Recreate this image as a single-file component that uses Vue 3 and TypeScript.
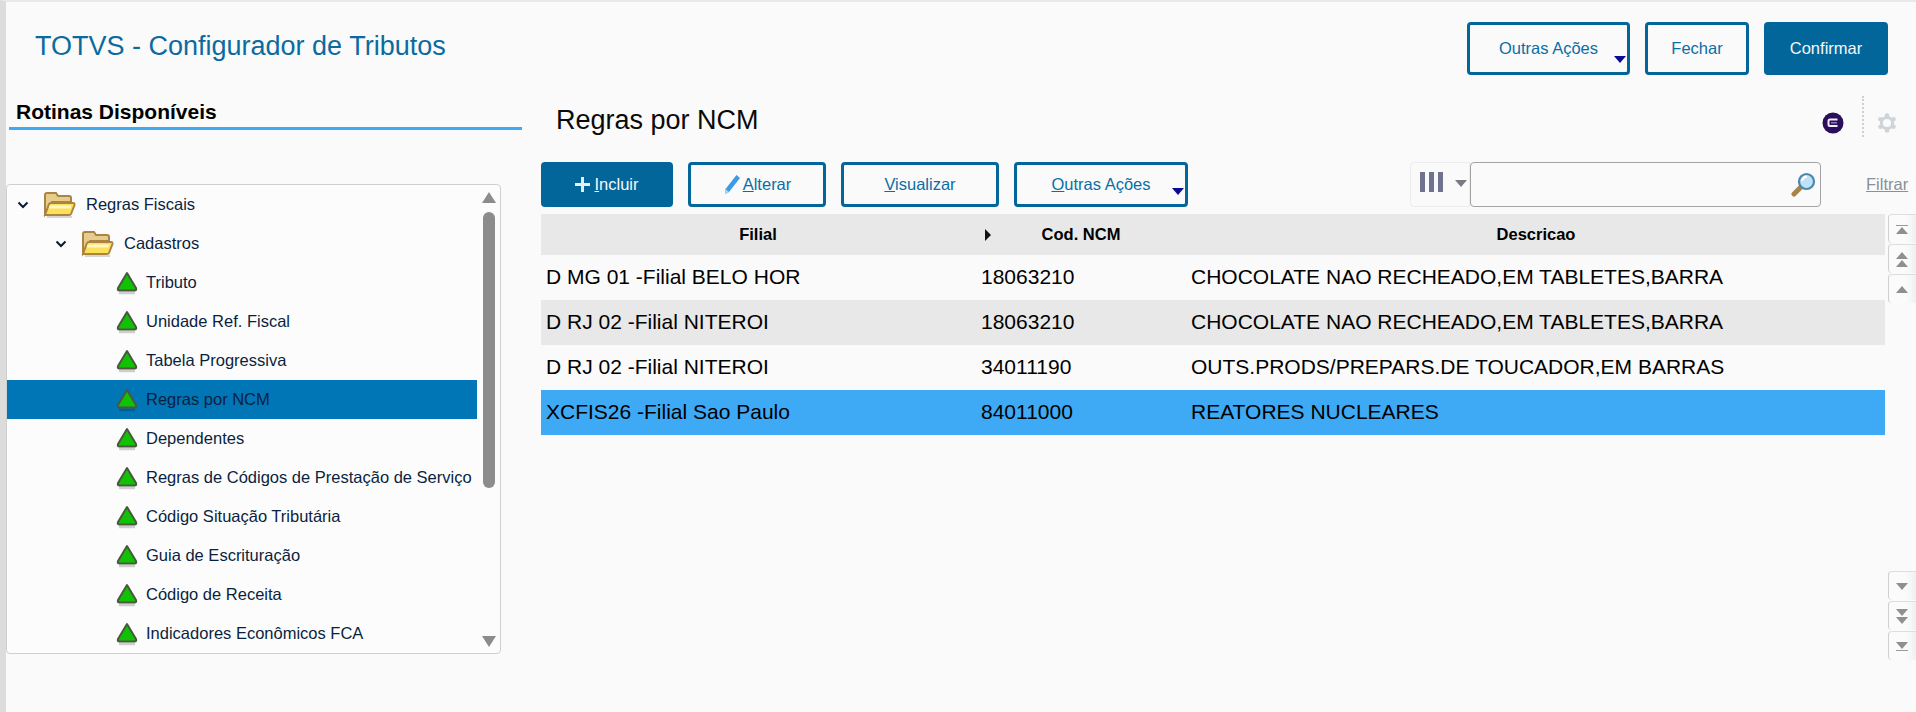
<script setup lang="ts">
// Configurador de Tributos: routine tree on the left, NCM rules grid on the right.
interface TreeItem { label: string; selected?: boolean }
interface GridRow { filial: string; ncm: string; descricao: string; tone?: 'alt' | 'active' }

const routines: TreeItem[] = [
  { label: 'Tributo' },
  { label: 'Unidade Ref. Fiscal' },
  { label: 'Tabela Progressiva' },
  { label: 'Regras por NCM', selected: true },
  { label: 'Dependentes' },
  { label: 'Regras de Códigos de Prestação de Serviço' },
  { label: 'Código Situação Tributária' },
  { label: 'Guia de Escrituração' },
  { label: 'Código de Receita' },
  { label: 'Indicadores Econômicos FCA' },
]

const rows: GridRow[] = [
  { filial: 'D MG 01 -Filial BELO HOR', ncm: '18063210', descricao: 'CHOCOLATE NAO RECHEADO,EM TABLETES,BARRA' },
  { filial: 'D RJ 02 -Filial NITEROI', ncm: '18063210', descricao: 'CHOCOLATE NAO RECHEADO,EM TABLETES,BARRA', tone: 'alt' },
  { filial: 'D RJ 02 -Filial NITEROI', ncm: '34011190', descricao: 'OUTS.PRODS/PREPARS.DE TOUCADOR,EM BARRAS' },
  { filial: 'XCFIS26 -Filial Sao Paulo', ncm: '84011000', descricao: 'REATORES NUCLEARES', tone: 'active' },
]
</script>

<template>
  <div class="page">
    <header class="top">
      <h1 class="app-title">TOTVS - Configurador de Tributos</h1>
      <div class="top-actions">
        <button class="btn btn--line btn--wide">Outras Ações<i class="menu-caret"></i></button>
        <button class="btn btn--line btn--close">Fechar</button>
        <button class="btn btn--solid btn--confirm">Confirmar</button>
      </div>
    </header>

    <div class="content">
      <aside class="side">
        <h2 class="side-title">Rotinas Disponíveis</h2>
        <div class="tree">
          <div class="tree-rows">
            <div class="node node--l0">
              <svg class="chev" width="12" height="8" viewBox="0 0 12 8"><path d="M1.5 1.5 6 6l4.5-4.5" fill="none" stroke="#0b1a33" stroke-width="2"/></svg>
              <svg class="folder" width="33" height="27" viewBox="0 0 33 27">
                <path d="M4 26h25" stroke="#000" stroke-opacity=".15" stroke-width="2"/>
                <path d="M2 23V4q0-2 2-2h9l2 3h11q2 0 2 2v4H9z" fill="#e6cd8e" stroke="#ab8444" stroke-width="2"/>
                <path d="M2 24 6 13q.4-1 2-1h22q2 0 1.500 2L28 23q-.4 1-2 1z" fill="#fbe05a" stroke="#ab8444" stroke-width="2"/>
                <path d="M6.500 14.500h22l-1 3H6z" fill="#fff7c4"/>
              </svg>
              <span class="node-label">Regras Fiscais</span>
            </div>
            <div class="node node--l1">
              <svg class="chev" width="12" height="8" viewBox="0 0 12 8"><path d="M1.5 1.5 6 6l4.5-4.5" fill="none" stroke="#0b1a33" stroke-width="2"/></svg>
              <svg class="folder" width="33" height="27" viewBox="0 0 33 27">
                <path d="M4 26h25" stroke="#000" stroke-opacity=".15" stroke-width="2"/>
                <path d="M2 23V4q0-2 2-2h9l2 3h11q2 0 2 2v4H9z" fill="#e6cd8e" stroke="#ab8444" stroke-width="2"/>
                <path d="M2 24 6 13q.4-1 2-1h22q2 0 1.500 2L28 23q-.4 1-2 1z" fill="#fbe05a" stroke="#ab8444" stroke-width="2"/>
                <path d="M6.500 14.500h22l-1 3H6z" fill="#fff7c4"/>
              </svg>
              <span class="node-label">Cadastros</span>
            </div>
            <div
              v-for="item in routines"
              :key="item.label"
              class="node node--leaf"
              :class="{ 'node--selected': item.selected }"
            >
              <svg class="leaf" width="24" height="25" viewBox="0 0 24 25">
                <path d="M4 23h16" stroke="#000" stroke-opacity=".18" stroke-width="2.500"/>
                <path d="M12 3 21 18q.8 2.500-1.500 2.500h-15Q2.200 20.500 3 18z" fill="#10c203" stroke="#48593f" stroke-width="2" stroke-linejoin="round"/>
              </svg>
              <span class="node-label">{{ item.label }}</span>
            </div>
          </div>
          <div class="tree-scroll">
            <i class="tree-arrow tree-arrow--up"></i>
            <i class="tree-thumb"></i>
            <i class="tree-arrow tree-arrow--down"></i>
          </div>
        </div>
      </aside>

      <main class="main">
        <div class="main-head">
          <h2 class="main-title">Regras por NCM</h2>
          <div class="main-tools">
            <svg width="22" height="22" viewBox="0 0 22 22">
              <circle cx="11" cy="11" r="10.500" fill="#2c0f5c"/>
              <path d="M15.500 7.500H8q-1.500 0-1.500 1.500v3.500Q6.500 14 8 14h7.500" fill="none" stroke="#f1eef8" stroke-width="2"/>
              <path d="M9 10.800h6" stroke="#8f7cc0" stroke-width="1.500"/>
            </svg>
            <i class="tool-sep"></i>
            <svg width="20" height="20" viewBox="0 0 20 20">
              <g fill="#cfd3da">
                <circle cx="10" cy="2.500" r="2.300"/><circle cx="10" cy="17.500" r="2.300"/>
                <circle cx="3.500" cy="6.200" r="2.300"/><circle cx="16.500" cy="6.200" r="2.300"/>
                <circle cx="3.500" cy="13.800" r="2.300"/><circle cx="16.500" cy="13.800" r="2.300"/>
              </g>
              <circle cx="10" cy="10" r="5.600" fill="none" stroke="#cfd3da" stroke-width="3"/>
            </svg>
          </div>
        </div>

        <div class="toolbar">
          <button class="btn btn--solid btn--sm btn--add">
            <svg width="15" height="15" viewBox="0 0 15 15"><path d="M7.500 0v15M0 7.500h15" stroke="#e6eef4" stroke-width="3"/></svg>
            <span><u>I</u>ncluir</span>
          </button>
          <button class="btn btn--line btn--sm btn--edit">
            <svg width="17" height="20" viewBox="0 0 17 20">
              <path d="M13.500 0 17 3 6 17l-4 2 .5-5z" fill="#3f9ae6"/>
              <path d="M2.500 14 6 17l-4 2z" fill="#a9d3f3"/>
            </svg>
            <span><u>A</u>lterar</span>
          </button>
          <button class="btn btn--line btn--sm btn--view"><span><u>V</u>isualizar</span></button>
          <button class="btn btn--line btn--sm btn--more"><span><u>O</u>utras Ações</span><i class="menu-caret"></i></button>

          <div class="search-area">
            <div class="col-picker">
              <span class="col-bars"><i></i><i></i><i></i></span>
              <i class="col-caret"></i>
            </div>
            <div class="search">
              <input class="search-input" type="text" aria-label="Pesquisar" />
              <svg width="26" height="26" viewBox="0 0 26 26">
                <path d="M10 15 3 22" stroke="#a8844a" stroke-width="5" stroke-linecap="round"/>
                <circle cx="15.500" cy="9.500" r="7.500" fill="#bfe3f6" stroke="#4c86ad" stroke-width="2.200"/>
                <path d="M11 9q1-4 5-4.500" fill="none" stroke="#fff" stroke-width="2"/>
              </svg>
            </div>
          </div>
          <a class="filter-link">Filtrar</a>
        </div>

        <div class="grid-area">
          <div class="grid">
            <div class="grid-row grid-row--head">
              <div class="cell cell--filial">Filial</div>
              <div class="cell cell--ncm"><i class="sort-mark"></i>Cod. NCM</div>
              <div class="cell cell--desc">Descricao</div>
            </div>
            <div
              v-for="row in rows"
              :key="row.filial + row.ncm"
              class="grid-row"
              :class="row.tone ? `grid-row--${row.tone}` : ''"
            >
              <div class="cell cell--filial">{{ row.filial }}</div>
              <div class="cell cell--ncm">{{ row.ncm }}</div>
              <div class="cell cell--desc">{{ row.descricao }}</div>
            </div>
          </div>

          <div class="pager">
            <div class="pager-group">
              <button class="pager-btn" aria-label="Primeiro"><i class="bar"></i><i class="tri tri--up"></i></button>
              <button class="pager-btn" aria-label="Página anterior"><i class="tri tri--up"></i><i class="tri tri--up"></i></button>
              <button class="pager-btn" aria-label="Anterior"><i class="tri tri--up"></i></button>
            </div>
            <div class="pager-group">
              <button class="pager-btn" aria-label="Próximo"><i class="tri tri--down"></i></button>
              <button class="pager-btn" aria-label="Próxima página"><i class="tri tri--down"></i><i class="tri tri--down"></i></button>
              <button class="pager-btn" aria-label="Último"><i class="tri tri--down"></i><i class="bar"></i></button>
            </div>
          </div>
        </div>
      </main>
    </div>
  </div>
</template>

<style scoped>
.page {
  box-sizing: border-box;
  width: 1916px;
  height: 712px;
  overflow: hidden;
  display: flex;
  flex-direction: column;
  background: #fafafa;
  border-top: 2px solid #e9e9e9;
  border-left: 6px solid #dcdcdc;
  font-family: "Liberation Sans", Arial, sans-serif;
}

/* header */
.top { display: flex; align-items: flex-start; height: 93px; flex: none; }
.app-title {
  margin: 29px 0 0 29px;
  font-size: 27px;
  line-height: 30px;
  font-weight: 400;
  color: #0b6b9f;
}
.top-actions { margin: 20px 28px 0 auto; display: flex; gap: 15px; }

.btn {
  box-sizing: border-box;
  position: relative;
  flex: none;
  display: inline-flex;
  align-items: center;
  justify-content: center;
  padding: 0;
  border-radius: 4px;
  font-family: inherit;
  font-size: 16.5px;
  cursor: pointer;
}
.btn--line { background: #fafafa; border: 3px solid #02669a; color: #0a6ea6; }
.btn--solid { background: #02669a; border: 0; color: #f4f8fb; }
.btn--wide { width: 163px; height: 53px; }
.btn--close { width: 104px; height: 53px; }
.btn--confirm { width: 124px; height: 53px; }
.btn--sm { height: 45px; }
.btn--add { width: 132px; gap: 4px; }
.btn--edit { width: 138px; gap: 3px; }
.btn--view { width: 158px; }
.btn--more { width: 174px; }

.menu-caret {
  position: absolute;
  right: 1px;
  bottom: 9px;
  width: 0;
  height: 0;
  border-left: 6px solid transparent;
  border-right: 6px solid transparent;
  border-top: 7px solid #0a0a96;
}

.content { flex: 1; display: flex; min-height: 0; }

/* routine tree */
.side { width: 520px; flex: none; }
.side-title {
  margin: 0 4px 0 3px;
  padding: 5px 0 4px 7px;
  font-size: 21px;
  line-height: 23px;
  font-weight: 700;
  color: #000;
  border-bottom: 3px solid #3ea9f5;
}
.tree {
  box-sizing: border-box;
  width: 495px;
  height: 470px;
  margin-top: 54px;
  display: flex;
  border: 1px solid #cfcfcf;
  border-radius: 4px;
  background: #fcfcfc;
  overflow: hidden;
}
.tree-rows { width: 470px; flex: none; }
.node {
  height: 39px;
  display: flex;
  align-items: center;
  font-size: 16.5px;
  color: #0b1f3f;
  white-space: nowrap;
}
.node--l0 { padding-left: 10px; }
.node--l1 { padding-left: 48px; }
.node--leaf { padding-left: 108px; }
.node--selected { background: #0076b6; }
.chev { flex: none; margin-right: 14px; }
.folder { flex: none; margin-right: 10px; }
.leaf { flex: none; margin-right: 7px; }

.tree-scroll {
  flex: 1;
  display: flex;
  flex-direction: column;
  align-items: center;
  padding: 7px 0 6px;
}
.tree-arrow { width: 0; height: 0; border-left: 7px solid transparent; border-right: 7px solid transparent; }
.tree-arrow--up { border-bottom: 11px solid #8c8c8c; }
.tree-arrow--down { border-top: 11px solid #8c8c8c; margin-top: auto; }
.tree-thumb { width: 12px; height: 276px; margin-top: 9px; border-radius: 6px; background: #8c8c8c; }

/* rules grid */
.main { flex: 1; min-width: 0; padding-left: 15px; }
.main-head { display: flex; align-items: center; height: 67px; padding-left: 15px; }
.main-title { margin: 0 0 17px; font-size: 27px; line-height: 34px; font-weight: 400; color: #0a0a0a; }
.main-tools { margin: 0 19px 12px auto; display: flex; align-items: center; }
.tool-sep { width: 0; height: 41px; margin: -13px 13px 0 18px; border-left: 2px dotted #cfcfcf; }

.toolbar { display: flex; align-items: center; height: 45px; gap: 15px; }
.search-area { margin-left: 207px; display: flex; flex: none; }
.col-picker {
  box-sizing: border-box;
  width: 60px;
  height: 45px;
  padding: 9px 3px 0 9px;
  display: flex;
  gap: 12px;
  border: 1px solid #ececec;
  border-radius: 4px 0 0 4px;
}
.col-bars { display: flex; gap: 4px; }
.col-bars i { width: 5px; height: 20px; background: #6f7390; }
.col-caret {
  width: 0;
  height: 0;
  margin-top: 8px;
  border-left: 6px solid transparent;
  border-right: 6px solid transparent;
  border-top: 7px solid #7a7a84;
}
.search {
  box-sizing: border-box;
  width: 351px;
  height: 45px;
  display: flex;
  align-items: center;
  padding-right: 3px;
  border: 1px solid #a3a3a3;
  border-radius: 4px;
}
.search-input { flex: 1; min-width: 0; border: 0; outline: 0; background: transparent; }
.filter-link {
  margin-left: 30px;
  font-size: 16.5px;
  color: #8a8f9a;
  text-decoration: underline;
}

.grid-area { display: flex; gap: 3px; margin-top: 7px; height: 446px; }
.grid { width: 1344px; flex: none; }
.grid-row {
  display: grid;
  grid-template-columns: 434px 212px 1fr;
  align-items: center;
  height: 45px;
  font-size: 21px;
  color: #000;
  white-space: nowrap;
}
.grid-row--head { height: 41px; background: #e8e8e8; font-size: 16.5px; font-weight: 700; text-align: center; }
.grid-row--alt { background: #e8e8e8; }
.grid-row--active { background: #3ea9f5; }
.cell { padding: 0 0 2px 5px; overflow: hidden; }
.cell--ncm { padding-left: 6px; }
.cell--desc { padding-left: 4px; }
.grid-row--head .cell { padding: 0; position: relative; }
.sort-mark {
  position: absolute;
  left: 10px;
  top: 4px;
  width: 0;
  height: 0;
  border-top: 6px solid transparent;
  border-bottom: 6px solid transparent;
  border-left: 6px solid #111;
}

.pager { flex: 1; display: flex; flex-direction: column; justify-content: space-between; }
.pager-group { display: flex; flex-direction: column; gap: 1px; }
.pager-btn {
  box-sizing: border-box;
  width: 100%;
  height: 29px;
  padding: 0 2px 0 0;
  display: flex;
  flex-direction: column;
  align-items: center;
  justify-content: center;
  gap: 1px;
  background: linear-gradient(90deg, #fbfbfb 60%, #eef1f3);
  border: 0;
  border-left: 1px solid #cfcfcf;
  border-top: 1px solid #dedede;
  border-radius: 4px 0 0 4px;
}
.tri { width: 0; height: 0; border-left: 6px solid transparent; border-right: 6px solid transparent; }
.tri--up { border-bottom: 7px solid #8f8f8f; }
.tri--down { border-top: 7px solid #8f8f8f; }
.bar { width: 12px; height: 1px; background: #9a9a9a; }
</style>

<style>
html, body { margin: 0; background: #fafafa; }
</style>
